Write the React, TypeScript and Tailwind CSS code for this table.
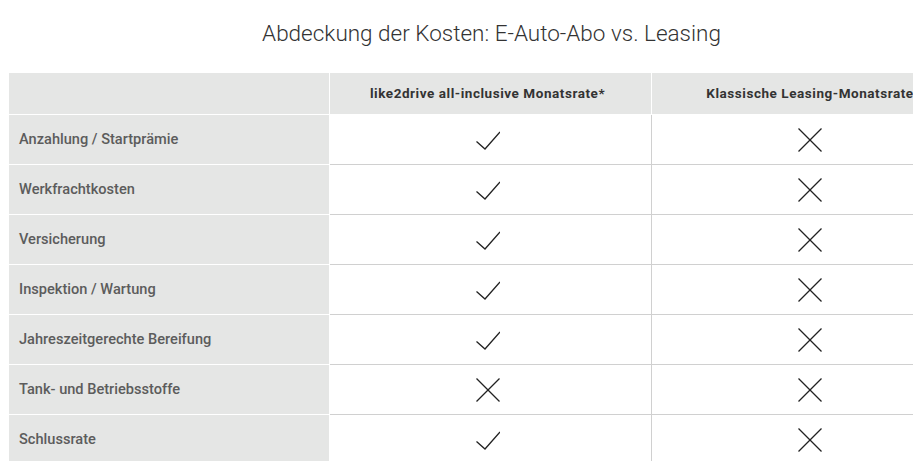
import React from "react";

const rows: { label: string; a: boolean; b: boolean }[] = [
  { label: "Anzahlung / Startprämie", a: true, b: false },
  { label: "Werkfrachtkosten", a: true, b: false },
  { label: "Versicherung", a: true, b: false },
  { label: "Inspektion / Wartung", a: true, b: false },
  { label: "Jahreszeitgerechte Bereifung", a: true, b: false },
  { label: "Tank- und Betriebsstoffe", a: false, b: false },
  { label: "Schlussrate", a: true, b: false },
];

function Check() {
  return (
    <svg width="24" height="24" viewBox="0 0 24 24" className="block">
      <polyline points="0.5,13.5 9,21 24,4" fill="none" stroke="#222" strokeWidth="1.3" />
    </svg>
  );
}

function Cross() {
  return (
    <svg width="24" height="24" viewBox="0 0 24 24" className="block">
      <line x1="0.5" y1="0.5" x2="23.5" y2="23.5" stroke="#222" strokeWidth="1.3" />
      <line x1="23.5" y1="0.5" x2="0.5" y2="23.5" stroke="#222" strokeWidth="1.3" />
    </svg>
  );
}

export default function App() {
  return (
    <div className="w-[913px] h-[461px] overflow-hidden bg-white" style={{ fontFamily: "Roboto, 'Liberation Sans', sans-serif" }}>
      <div className="w-[983px]">
        <div className="h-[73px] pt-[19px] text-center">
          <h1 className="text-[22.5px] leading-[28px] font-light text-[#333]">
            Abdeckung der Kosten: E-Auto-Abo vs. Leasing
          </h1>
        </div>
        <div className="ml-[9px] w-[965px]">
          <div className="flex h-[42px]">
            <div className="w-[321px] bg-[#e5e6e5] border-r border-b border-white" />
            <div className="w-[322px] pr-[6px] bg-[#e5e6e5] border-r border-b border-white flex items-center justify-center text-[13.5px] tracking-[0.55px] font-bold text-[#333]">
              like2drive all-inclusive Monatsrate*
            </div>
            <div className="w-[322px] pr-[6px] bg-[#e5e6e5] border-b border-white flex items-center justify-center text-[13.5px] tracking-[0.55px] font-bold text-[#333]">
              Klassische Leasing-Monatsrate
            </div>
          </div>
          {rows.map((r) => (
            <div key={r.label} className="flex h-[50px]">
              <div className="w-[321px] bg-[#e5e6e5] border-r border-b border-white flex items-center pl-[10px] text-[14.6px] font-medium text-[#5c5c5c]">
                {r.label}
              </div>
              <div className="w-[322px] pr-[6px] border-r border-b border-[#d0d0d0] flex items-center justify-center">
                {r.a ? <Check /> : <Cross />}
              </div>
              <div className="w-[322px] pr-[6px] border-b border-[#d0d0d0] flex items-center justify-center">
                {r.b ? <Check /> : <Cross />}
              </div>
            </div>
          ))}
        </div>
      </div>
    </div>
  );
}
